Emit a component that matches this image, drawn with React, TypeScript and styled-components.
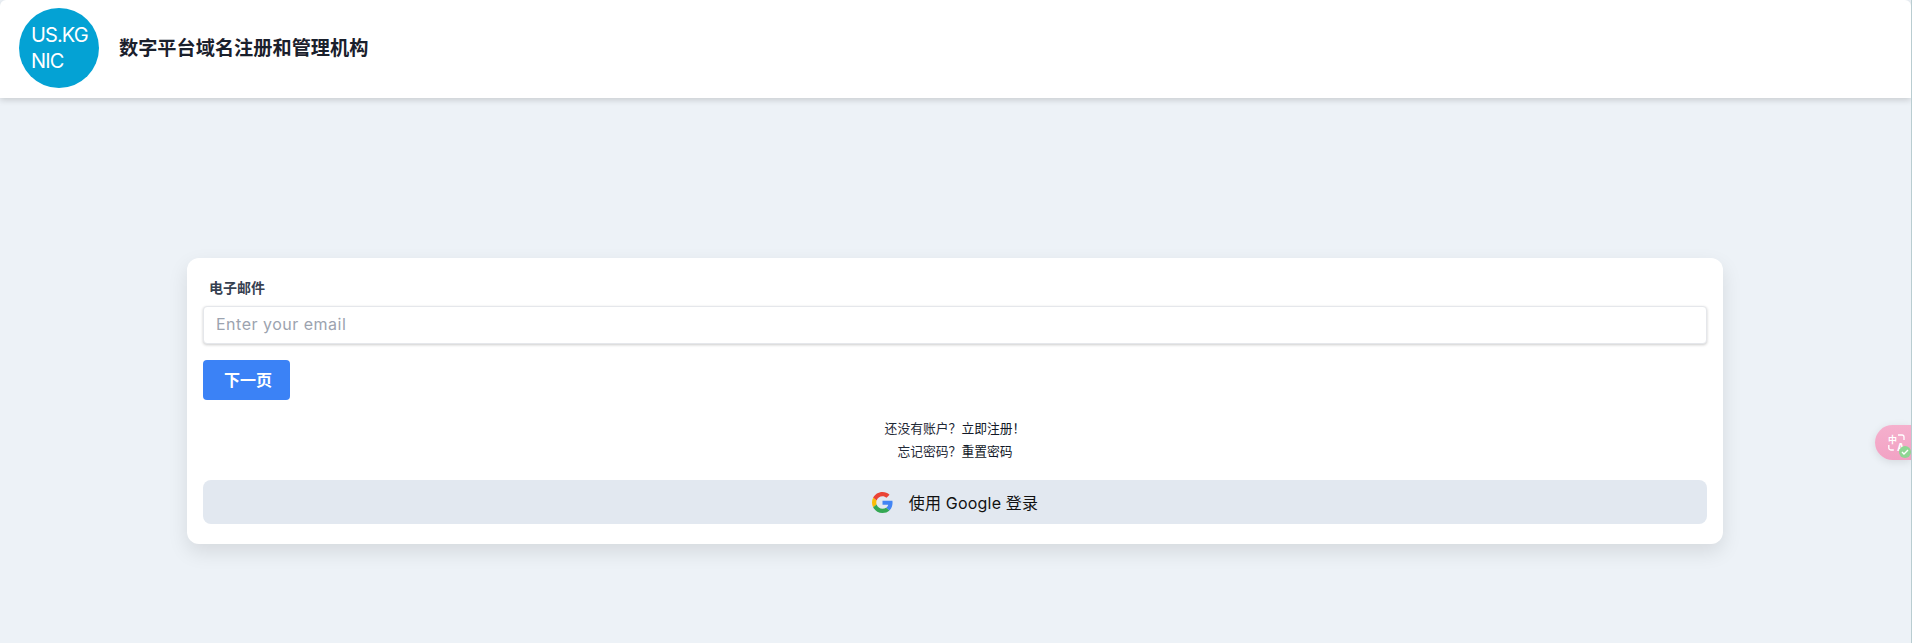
import React from "react";
import styled, { createGlobalStyle } from "styled-components";

const GlobalStyle = createGlobalStyle`
  html, body {
    margin: 0;
    padding: 0;
    height: 100%;
    overflow: hidden;
    background: #edf2f7;
  }
  * {
    box-sizing: border-box;
  }
  #root {
    height: 100%;
  }
`;

const Page = styled.div`
  position: relative;
  height: 643px;
  overflow: hidden;
  border-right: 1px solid #b9cdd1;
  background: #edf2f7;
  font-family: Inter, "Noto Sans CJK SC", sans-serif;
`;

const Header = styled.header`
  display: flex;
  align-items: center;
  gap: 20px;
  height: 98px;
  padding: 0 0 2px 19px;
  background: #fff;
  border-radius: 6px 6px 0 0;
  box-shadow: 0 2px 6px rgba(0, 0, 0, 0.16);
`;

const Logo = styled.div`
  display: flex;
  flex-direction: column;
  justify-content: center;
  width: 80px;
  height: 80px;
  padding-left: 12px;
  border-radius: 50%;
  background: #04a2d4;
  color: #fff;
  font-size: 20px;
  font-weight: 400;
  line-height: 26px;
  letter-spacing: -0.9px;
`;

const Title = styled.h1`
  margin: 0 0 3px;
  color: #1a202c;
  font-size: 19.2px;
  font-weight: 700;
  font-family: "Noto Sans CJK SC", sans-serif;
`;

const Main = styled.main`
  display: flex;
  justify-content: center;
  padding: 160px 1px 0 0;
`;

const Card = styled.section`
  width: 1536px;
  padding: 19px 16px 20px;
  border-radius: 12px;
  background: #fff;
  box-shadow: 0 8px 20px rgba(0, 0, 0, 0.1);
`;

const Label = styled.label`
  display: block;
  margin-bottom: 9px;
  padding-left: 6px;
  color: #374151;
  font-size: 14px;
  font-weight: 600;
  line-height: 20px;
  font-family: "Noto Sans CJK SC", sans-serif;
`;

const EmailInput = styled.input`
  display: block;
  width: 100%;
  height: 38px;
  padding: 0 12px 2px;
  border: 1px solid #e5e7eb;
  border-radius: 4px;
  box-shadow: 0 1px 3px rgba(0, 0, 0, 0.2);
  font-family: Inter, sans-serif;
  font-size: 16px;
  letter-spacing: 0.5px;
  outline: none;

  &::placeholder {
    color: #9ca3af;
    opacity: 1;
  }
`;

const NextButton = styled.button`
  display: block;
  width: 87px;
  height: 40px;
  margin-top: 16px;
  padding: 0 0 2px 3px;
  border: 0;
  border-radius: 4px;
  background: #3b82f6;
  color: #fff;
  font-family: "Noto Sans CJK SC", sans-serif;
  font-size: 16px;
  font-weight: 700;
`;

const Links = styled.div`
  display: flex;
  flex-direction: column;
  gap: 4px;
  margin-top: 18px;
  text-align: center;
`;

const LinkLine = styled.p`
  margin: 0;
  color: #1f2937;
  font-family: "Noto Sans CJK SC", sans-serif;
  font-size: 12.8px;
  line-height: 19px;
`;

const TextLink = styled.a`
  color: #111827;
  text-decoration: none;
`;

const GoogleButton = styled.button`
  display: flex;
  align-items: center;
  justify-content: center;
  gap: 16px;
  width: 100%;
  height: 44px;
  margin-top: 20px;
  border: 0;
  border-radius: 8px;
  background: #e2e8f0;
  color: #111;
  font-family: Inter, "Noto Sans CJK SC", sans-serif;
  font-size: 16px;
  letter-spacing: 0.2px;
  padding: 0;
`;

const TranslateBadge = styled.div`
  position: absolute;
  top: 425px;
  right: 0;
  display: flex;
  align-items: center;
  width: 36px;
  height: 35px;
  padding-left: 13px;
  border-radius: 18px 0 0 18px;
  background: linear-gradient(180deg, #f5b0cd, #f2a2c4);
  box-shadow: 0 2px 8px rgba(0, 0, 0, 0.1);
`;

const CheckDot = styled.span`
  position: absolute;
  right: 0;
  bottom: 2px;
  display: flex;
  align-items: center;
  justify-content: center;
  width: 12px;
  height: 12px;
  border-radius: 50%;
  background: #8fd694;
`;

function GoogleIcon() {
  return (
    <svg width="21" height="21" viewBox="0 0 48 48" aria-hidden="true">
      <path fill="#EA4335" d="M24 9.5c3.54 0 6.71 1.22 9.21 3.6l6.85-6.85C35.9 2.38 30.47 0 24 0 14.62 0 6.51 5.38 2.56 13.22l7.98 6.19C12.43 13.72 17.74 9.5 24 9.5z" />
      <path fill="#4285F4" d="M46.98 24.55c0-1.57-.15-3.09-.38-4.55H24v9.02h12.94c-.58 2.96-2.26 5.48-4.78 7.18l7.73 6c4.51-4.18 7.09-10.36 7.09-17.65z" />
      <path fill="#FBBC05" d="M10.53 28.59c-.48-1.45-.76-2.99-.76-4.59s.27-3.14.76-4.59l-7.98-6.19C.92 16.46 0 20.12 0 24c0 3.88.92 7.54 2.56 10.78l7.97-6.19z" />
      <path fill="#34A853" d="M24 48c6.48 0 11.93-2.13 15.89-5.81l-7.73-6c-2.15 1.45-4.92 2.3-8.16 2.3-6.26 0-11.57-4.22-13.47-9.91l-7.98 6.19C6.51 42.62 14.62 48 24 48z" />
    </svg>
  );
}

function TranslateIcon() {
  return (
    <svg width="17" height="17" viewBox="0 0 17 17" aria-hidden="true">
      <text x="0" y="8.5" fontSize="9" fontWeight="700" fill="#fff" fontFamily="'Noto Sans CJK SC', sans-serif">中</text>
      <text x="9" y="16.5" fontSize="10" fontWeight="700" fill="#fff" fontFamily="Inter, sans-serif">A</text>
      <path d="M10 1h4a2 2 0 0 1 2 2v3M.8 11v3a2 2 0 0 0 2 2h3" fill="none" stroke="#fff" strokeWidth="1.3" />
    </svg>
  );
}

export default function App() {
  return (
    <Page>
      <GlobalStyle />
      <Header>
        <Logo>
          <span>US.KG</span>
          <span>NIC</span>
        </Logo>
        <Title>数字平台域名注册和管理机构</Title>
      </Header>
      <Main>
        <Card>
          <Label htmlFor="email">电子邮件</Label>
          <EmailInput id="email" type="email" placeholder="Enter your email" />
          <NextButton type="button">下一页</NextButton>
          <Links>
            <LinkLine>
              还没有账户？<TextLink href="#">立即注册！</TextLink>
            </LinkLine>
            <LinkLine>
              忘记密码？<TextLink href="#">重置密码</TextLink>
            </LinkLine>
          </Links>
          <GoogleButton type="button">
            <GoogleIcon />
            <span>使用 Google 登录</span>
          </GoogleButton>
        </Card>
      </Main>
      <TranslateBadge>
        <TranslateIcon />
        <CheckDot>
          <svg width="8" height="8" viewBox="0 0 8 8" aria-hidden="true">
            <path d="M1 4l2 2 4-4" fill="none" stroke="#fff" strokeWidth="1.4" />
          </svg>
        </CheckDot>
      </TranslateBadge>
    </Page>
  );
}
